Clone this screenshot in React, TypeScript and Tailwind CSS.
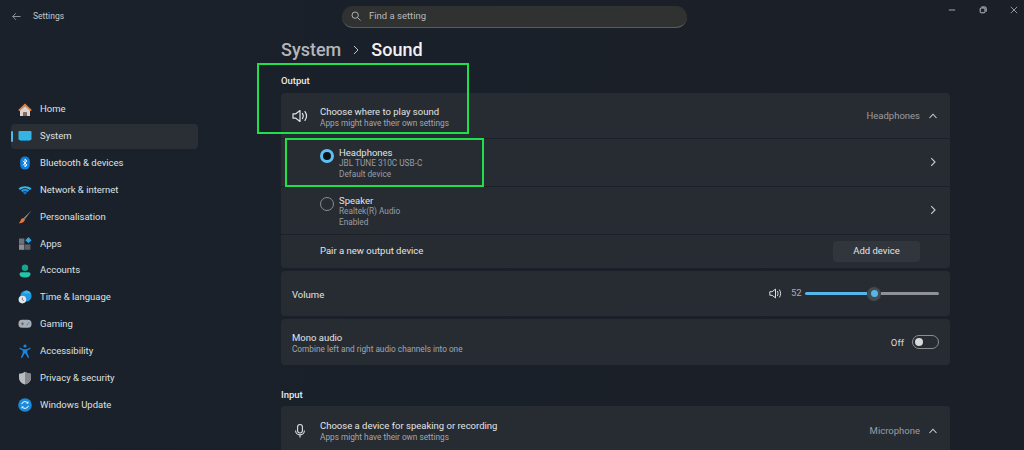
import { ReactNode } from "react";

type NavItem = { label: string; icon: ReactNode; active?: boolean };

const HomeIcon = (
  <svg viewBox="0 0 14 14" className="w-[14px] h-[14px]">
    <path d="M7 .6 13.8 7 12.6 8.2 7 3 1.4 8.2.2 7Z" fill="#e8813a" />
    <path d="M2 7.5 7 3l5 4.5V13H8.6V9.5H5.4V13H2Z" fill="#d9d4d0" />
    <rect x="5.4" y="9" width="3.2" height="4" fill="#8a6a58" />
  </svg>
);
const SystemIcon = (
  <svg viewBox="0 0 14 14" className="w-[14px] h-[14px]">
    <rect x="0.5" y="2" width="13" height="9" rx="1" fill="#35b4e4" />
    <rect x="2" y="11" width="10" height="1" fill="#1e7fb0" />
  </svg>
);
const BluetoothIcon = (
  <svg viewBox="0 0 14 14" className="w-[14px] h-[14px]">
    <rect x="2.2" y="0.5" width="9.6" height="13" rx="4.6" fill="#0f7fe0" />
    <path d="M5 4.8 9 9 7 11V3l2 2-4 4.2" fill="none" stroke="#fff" strokeWidth="0.9" />
  </svg>
);
const NetworkIcon = (
  <svg viewBox="0 0 14 14" className="w-[14px] h-[14px]">
    <path d="M.5 5.4C4 2.4 10 2.4 13.5 5.4L12 7C9 4.8 5 4.8 2 7Z" fill="#36b5ee" />
    <path d="M2.8 7.4C5.2 5.6 8.8 5.6 11.2 7.4L9.6 9C8 8 6 8 4.4 9Z" fill="#1f95e0" />
    <path d="M4.8 9.4C6 8.6 8 8.6 9.2 9.4L7 11.8Z" fill="#0f6fc8" />
  </svg>
);
const BrushIcon = (
  <svg viewBox="0 0 14 14" className="w-[14px] h-[14px]">
    <path d="M13.4.4 5.8 8 6.9 9.1Z" fill="#9a9ca0" />
    <path d="M5.5 7.9 7 9.4C6.6 12 3.4 13.6.7 13.2 2.4 12.2 2.4 11 3 9.6 3.5 8.6 4.5 8 5.5 7.9Z" fill="#e8792e" />
  </svg>
);
const AppsIcon = (
  <svg viewBox="0 0 14 14" className="w-[14px] h-[14px]">
    <rect x="1" y="1.5" width="5.4" height="5.4" fill="#6e7278" />
    <rect x="1" y="7.4" width="5.4" height="5.4" fill="#8c8f94" />
    <rect x="7" y="7.4" width="5.4" height="5.4" fill="#5d6066" />
    <rect x="8.2" y="1" width="4.4" height="4.4" fill="#2fa6e6" transform="rotate(45 10.4 3.2)" />
  </svg>
);
const AccountsIcon = (
  <svg viewBox="0 0 14 14" className="w-[14px] h-[14px]">
    <circle cx="7" cy="3.8" r="3.2" fill="#17a58f" />
    <path d="M1.5 10c0-1 .8-1.8 1.8-1.8h7.4c1 0 1.8.8 1.8 1.8 0 2.4-2.6 3.5-5.5 3.5S1.5 12.4 1.5 10Z" fill="#23c4a8" />
  </svg>
);
const TimeIcon = (
  <svg viewBox="0 0 14 14" className="w-[14px] h-[14px]">
    <circle cx="8" cy="6" r="5.6" fill="#1f9ae0" />
    <path d="M8 .4a5.6 5.6 0 0 1 5 3.2H5.4A5.6 5.6 0 0 1 8 .4Z" fill="#3fb8ee" />
    <circle cx="4.4" cy="9.6" r="3.8" fill="#e4e6e8" />
    <path d="M4.4 7.6v2.2l1.4.8" stroke="#555" strokeWidth="0.7" fill="none" />
  </svg>
);
const GamingIcon = (
  <svg viewBox="0 0 14 14" className="w-[14px] h-[14px]">
    <rect x="0.5" y="2.8" width="13" height="8" rx="3.6" fill="#a9adb3" />
    <path d="M3 6.8h3M4.5 5.3v3" stroke="#55595f" strokeWidth="0.8" />
    <circle cx="9.2" cy="7.6" r="0.8" fill="#2f8fdc" />
    <circle cx="10.8" cy="6" r="0.8" fill="#2f8fdc" />
  </svg>
);
const AccessIcon = (
  <svg viewBox="0 0 14 14" className="w-[14px] h-[14px]">
    <circle cx="7" cy="2" r="1.6" fill="#1b86dc" />
    <path d="M1.8 3.6 5.2 5.2h3.6l3.4-1.6.5 1L9.2 6.8v2l2 4.6-1.2.5L7.4 9.6h-.8L4 13.9l-1.2-.5 2-4.6v-2L1.3 4.6Z" fill="#1b86dc" />
  </svg>
);
const ShieldIcon = (
  <svg viewBox="0 0 14 14" className="w-[14px] h-[14px]">
    <path d="M7 .8c1.8 1.3 3.8 1.9 6 2v4C13 10 10.6 12.4 7 13.6 3.4 12.4 1 10 1 6.8v-4c2.2-.1 4.2-.7 6-2Z" fill="#b9bcc0" />
    <path d="M7 .8c1.8 1.3 3.8 1.9 6 2v4C13 10 10.6 12.4 7 13.6Z" fill="#85888d" />
  </svg>
);
const UpdateIcon = (
  <svg viewBox="0 0 14 14" className="w-[14px] h-[14px]">
    <circle cx="7" cy="7" r="6.8" fill="#1a8bdc" />
    <path d="M3.6 6.2A3.5 3.5 0 0 1 9.8 5M10.4 7.8A3.5 3.5 0 0 1 4.2 9" fill="none" stroke="#fff" strokeWidth="1" />
    <path d="M10.4 3.2v2.4H8ZM3.6 10.8V8.4H6Z" fill="#fff" />
  </svg>
);

const navItems: NavItem[] = [
  { label: "Home", icon: HomeIcon },
  { label: "System", icon: SystemIcon, active: true },
  { label: "Bluetooth & devices", icon: BluetoothIcon },
  { label: "Network & internet", icon: NetworkIcon },
  { label: "Personalisation", icon: BrushIcon },
  { label: "Apps", icon: AppsIcon },
  { label: "Accounts", icon: AccountsIcon },
  { label: "Time & language", icon: TimeIcon },
  { label: "Gaming", icon: GamingIcon },
  { label: "Accessibility", icon: AccessIcon },
  { label: "Privacy & security", icon: ShieldIcon },
  { label: "Windows Update", icon: UpdateIcon },
];

const Speaker = ({ className }: { className: string }) => (
  <svg viewBox="0 0 16 16" fill="none" stroke="#e0e2e4" strokeWidth="1.2" className={className}>
    <path d="M1 5.8v4.4h2.8L8 13.4V2.6L3.8 5.8Z" strokeLinejoin="round" />
    <path d="M10.4 5.4c1 1.6 1 3.6 0 5.2M13 3.6c1.8 2.6 1.8 6.2 0 8.8" strokeLinecap="round" />
  </svg>
);

const Chevron = ({ up }: { up?: boolean }) => (
  <svg viewBox="0 0 10 10" fill="none" stroke="#c9ccd0" strokeWidth="1.1" className="w-[10px] h-[10px]">
    <path d={up ? "M1.5 7 5 3.2 8.5 7" : "M3.2 1.2 7 5 3.2 8.8"} />
  </svg>
);

const Radio = ({ on }: { on?: boolean }) =>
  on ? (
    <span className="mt-[10px] w-[14px] h-[14px] rounded-full bg-[#0d1218] border-[3px] border-[#5cc0f2]" />
  ) : (
    <span className="mt-[10px] w-[14px] h-[14px] rounded-full border border-[#8a8d92]" />
  );

const DeviceRow = ({ on, name, model, status }: { on?: boolean; name: string; model: string; status: string }) => (
  <div className="h-[48px] flex items-start pl-[39px] pr-[12px] border-t border-[#1c2129]">
    <Radio on={on} />
    <div className="ml-[5px] mt-[7.5px] flex-1 text-[8.25px] leading-[11px] text-[#9a9ea4]">
      <div className="text-[9.5px] text-[#e2e4e6]">{name}</div>
      <div>{model}</div>
      <div>{status}</div>
    </div>
    <span className="mt-[18px]">
      <Chevron />
    </span>
  </div>
);

export default function App() {
  return (
    <div
      className="relative w-[1024px] h-[450px] overflow-hidden bg-gradient-to-r from-[#1a212a] to-[#1a1f28] text-[#e6e7e9]"
      style={{ fontFamily: 'Roboto, "Noto Sans", sans-serif' }}
    >
      {/* Title bar */}
      <div className="h-[33px] flex items-center">
        <div className="w-[342px] flex items-center pl-[12px] gap-[10px] text-[8.5px] text-[#c6c8cb]">
          <svg viewBox="0 0 10 10" fill="none" stroke="#a9acb0" strokeWidth="0.9" className="w-[9px] h-[9px]">
            <path d="M9.5 5H.8M4.4 1.3.8 5l3.6 3.7" />
          </svg>
          <span className="ml-[2px]">Settings</span>
        </div>
        <div className="w-[345px] h-[22px] rounded-full bg-[#2f3230] border-b border-[#5a5d5e] flex items-center pl-[9px] gap-[8px] text-[9.5px] text-[#b8babc]">
          <svg viewBox="0 0 12 12" fill="none" stroke="#c6c8ca" strokeWidth="1" className="w-[10px] h-[10px]">
            <circle cx="5" cy="5" r="3.8" />
            <path d="M8 8l3.4 3.4" />
          </svg>
          Find a setting
        </div>
        <div className="flex-1 flex justify-end items-start self-start pt-[5px] pr-[6px] gap-[23px]">
          <svg viewBox="0 0 10 10" stroke="#c5c7ca" strokeWidth="1" className="w-[8px] h-[10px]">
            <path d="M1 5h8" />
          </svg>
          <svg viewBox="0 0 10 10" fill="none" stroke="#c5c7ca" strokeWidth="1.2" className="w-[8px] h-[10px]">
            <rect x="1.5" y="2.5" width="6" height="6" rx="1.2" />
            <path d="M3 1.2h4.4c1 0 1.6.6 1.6 1.6V7" />
          </svg>
          <svg viewBox="0 0 10 10" stroke="#c5c7ca" strokeWidth="0.9" className="w-[8px] h-[10px]">
            <path d="M1 1l8 8M9 1 1 9" />
          </svg>
        </div>
      </div>

      <div className="flex">
        {/* Sidebar */}
        <aside className="w-[281px] pt-[64px] pl-[11px]">
          <nav className="w-[187px] flex flex-col gap-[1.85px]">
            {navItems.map((item) => (
              <div
                key={item.label}
                className={`relative h-[25px] flex items-center pl-[6.5px] gap-[8.5px] rounded text-[9.5px] text-[#dfe1e3] ${
                  item.active ? "bg-[#2a2f36]" : ""
                }`}
              >
                {item.active && <span className="absolute left-0 top-[7px] w-[2px] h-[11px] rounded bg-[#4fb6ec]" />}
                {item.icon}
                <span>{item.label}</span>
              </div>
            ))}
          </nav>
        </aside>

        {/* Main content */}
        <main className="w-[669px]">
          <h1 className="h-[33px] flex items-center text-[18px] font-medium leading-none">
            <span className="text-[#b4b6b9]">System</span>
            <svg viewBox="0 0 10 10" fill="none" stroke="#c2c4c7" strokeWidth="1" className="w-[10px] h-[10px] mx-[10px]">
              <path d="M3 1l4 4-4 4" />
            </svg>
            <span className="text-[#f1f2f3]">Sound</span>
          </h1>
          <h2 className="h-[27px] pt-[3px] flex items-center text-[9.5px] font-medium text-[#e9eaeb]">Output</h2>

          {/* Output card */}
          <section className="rounded bg-[#272c33]">
            <div className="h-[45px] flex items-center pl-[11px] pr-[12px]">
              <Speaker className="w-[16px] h-[16px]" />
              <div className="ml-[12px] pt-[3px] flex-1 text-[8.25px] leading-[11px] text-[#a3a6ab]">
                <div className="text-[9.5px] leading-[12px] text-[#e2e4e6]">Choose where to play sound</div>
                <div>Apps might have their own settings</div>
              </div>
              <span className="pt-[2px] text-[9.5px] text-[#9a9da2] mr-[8px]">Headphones</span>
              <Chevron up />
            </div>
            <DeviceRow on name="Headphones" model="JBL TUNE 310C USB-C" status="Default device" />
            <DeviceRow name="Speaker" model="Realtek(R) Audio" status="Enabled" />
            <div className="h-[34px] flex items-center justify-between pl-[39px] pr-[30px] border-t border-[#1c2129] text-[9.5px] text-[#e2e4e6]">
              <span>Pair a new output device</span>
              <span className="w-[87px] h-[21px] rounded-sm bg-[#31363d] flex items-center justify-center">Add device</span>
            </div>
          </section>

          {/* Volume */}
          <section className="mt-[3px] h-[45px] rounded bg-[#272c33] flex items-center justify-between pl-[11px] pr-[11px] text-[9.5px] text-[#e2e4e6]">
            <span className="pt-[3px]">Volume</span>
            <div className="flex items-center">
              <Speaker className="w-[13px] h-[13px]" />
              <span className="ml-[9px] w-[14px] text-[#a9acb0]">52</span>
              <div className="w-[134px] flex items-center">
                <span className="w-[62px] h-[2.5px] rounded-l-full bg-[#54b7ea]" />
                <span className="w-[14px] h-[14px] rounded-full bg-[#454a50] flex items-center justify-center">
                  <span className="w-[7px] h-[7px] rounded-full bg-[#54b7ea]" />
                </span>
                <span className="flex-1 h-[2.5px] rounded-r-full bg-[#8f9194]" />
              </div>
            </div>
          </section>

          {/* Mono audio */}
          <section className="mt-[3px] h-[46px] rounded bg-[#272c33] flex items-center justify-between pl-[11px] pr-[11px] text-[8.25px] leading-[11px] text-[#a3a6ab]">
            <div className="pt-[2px]">
              <div className="text-[9.5px] leading-[12px] text-[#e2e4e6]">Mono audio</div>
              <div>Combine left and right audio channels into one</div>
            </div>
            <div className="flex items-center gap-[8px] text-[9.5px] text-[#d8dadc]">
              <span>Off</span>
              <span className="w-[27px] h-[14px] rounded-full border border-[#8a8d91] flex items-center pl-[2px]">
                <span className="w-[8px] h-[8px] rounded-full bg-[#d7d9db]" />
              </span>
            </div>
          </section>

          <h2 className="mt-[18px] h-[23px] pt-[2px] flex items-center text-[9.5px] font-medium text-[#e9eaeb]">Input</h2>

          {/* Input card */}
          <section className="h-[48px] pt-[2px] rounded-t bg-[#272c33] flex items-center pl-[11px] pr-[12px]">
            <svg viewBox="0 0 16 16" fill="none" stroke="#e0e2e4" strokeWidth="1.1" className="w-[16px] h-[16px]">
              <rect x="5.6" y="1.5" width="4.8" height="8.5" rx="2.4" />
              <path d="M3.6 7.5a4.4 4.4 0 0 0 8.8 0M8 12v2.5" />
            </svg>
            <div className="ml-[12px] flex-1 text-[8.25px] leading-[11px] text-[#a3a6ab]">
              <div className="text-[9.5px] leading-[12px] text-[#e2e4e6]">Choose a device for speaking or recording</div>
              <div>Apps might have their own settings</div>
            </div>
            <span className="text-[9.5px] text-[#9a9da2] mr-[8px]">Microphone</span>
            <Chevron up />
          </section>
        </main>
      </div>

      {/* Green annotation boxes */}
      <div className="absolute left-[257px] top-[63px] w-[212px] h-[71px] border-2 border-[#1fe04a]" />
      <div className="absolute left-[285px] top-[138px] w-[199px] h-[49px] border-2 border-[#1fe04a]" />
    </div>
  );
}
